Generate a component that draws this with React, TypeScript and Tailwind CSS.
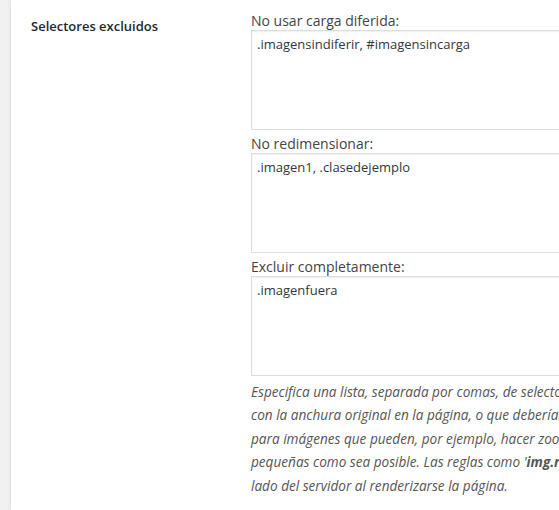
const FIELDS = [
  { label: "No usar carga diferida:", value: ".imagensindiferir, #imagensincarga" },
  { label: "No redimensionar:", value: ".imagen1, .clasedejemplo" },
  { label: "Excluir completamente:", value: ".imagenfuera" },
];

const FONT = '"Open Sans", "Noto Sans", sans-serif';

export default function App() {
  return (
    <div
      className="flex h-[510px] w-[559px] overflow-hidden bg-[#f1f1f1] text-[14px] text-[#444]"
      style={{ fontFamily: FONT }}
    >
      <div className="w-[10px] shrink-0" />
      <div className="flex flex-1 border-l border-[#e2e4e7] bg-white shadow-[-1px_0_2px_rgba(0,0,0,0.04)]">
        {/* Row heading */}
        <div className="w-[230px] shrink-0 pl-[20px] pt-[17px]">
          <p className="text-[13px] font-semibold leading-[19px] text-[#23282d]">Selectores excluidos</p>
        </div>

        {/* Fields */}
        <div className="flex-1 pl-[10px] pt-[11px]">
          {FIELDS.map(({ label, value }) => (
            <div key={label} className="mb-[4px]">
              <label className="block leading-[19px] text-[#444]">{label}</label>
              <textarea
                readOnly
                defaultValue={value}
                className="block h-[100px] w-[400px] resize-none border border-[#ddd] px-[5px] py-[3px] text-[13px] leading-[20px] text-[#32373c] shadow-[inset_0_1px_2px_rgba(0,0,0,0.07)] outline-none"
                style={{ fontFamily: FONT }}
              />
            </div>
          ))}
          <p className="whitespace-nowrap text-[13.6px] italic leading-[23.4px] text-[#555]">
            Especifica una lista, separada por comas, de selectores CSS para las imágenes
            <br />
            con la anchura original en la página, o que deberían cargarse sin carga diferida
            <br />
            para imágenes que pueden, por ejemplo, hacer zoom o mostrarse tan
            <br />
            pequeñas como sea posible. Las reglas como '<strong>img.responsive</strong>' se aplican en el
            <br />
            lado del servidor al renderizarse la página.
          </p>
        </div>
      </div>
    </div>
  );
}
